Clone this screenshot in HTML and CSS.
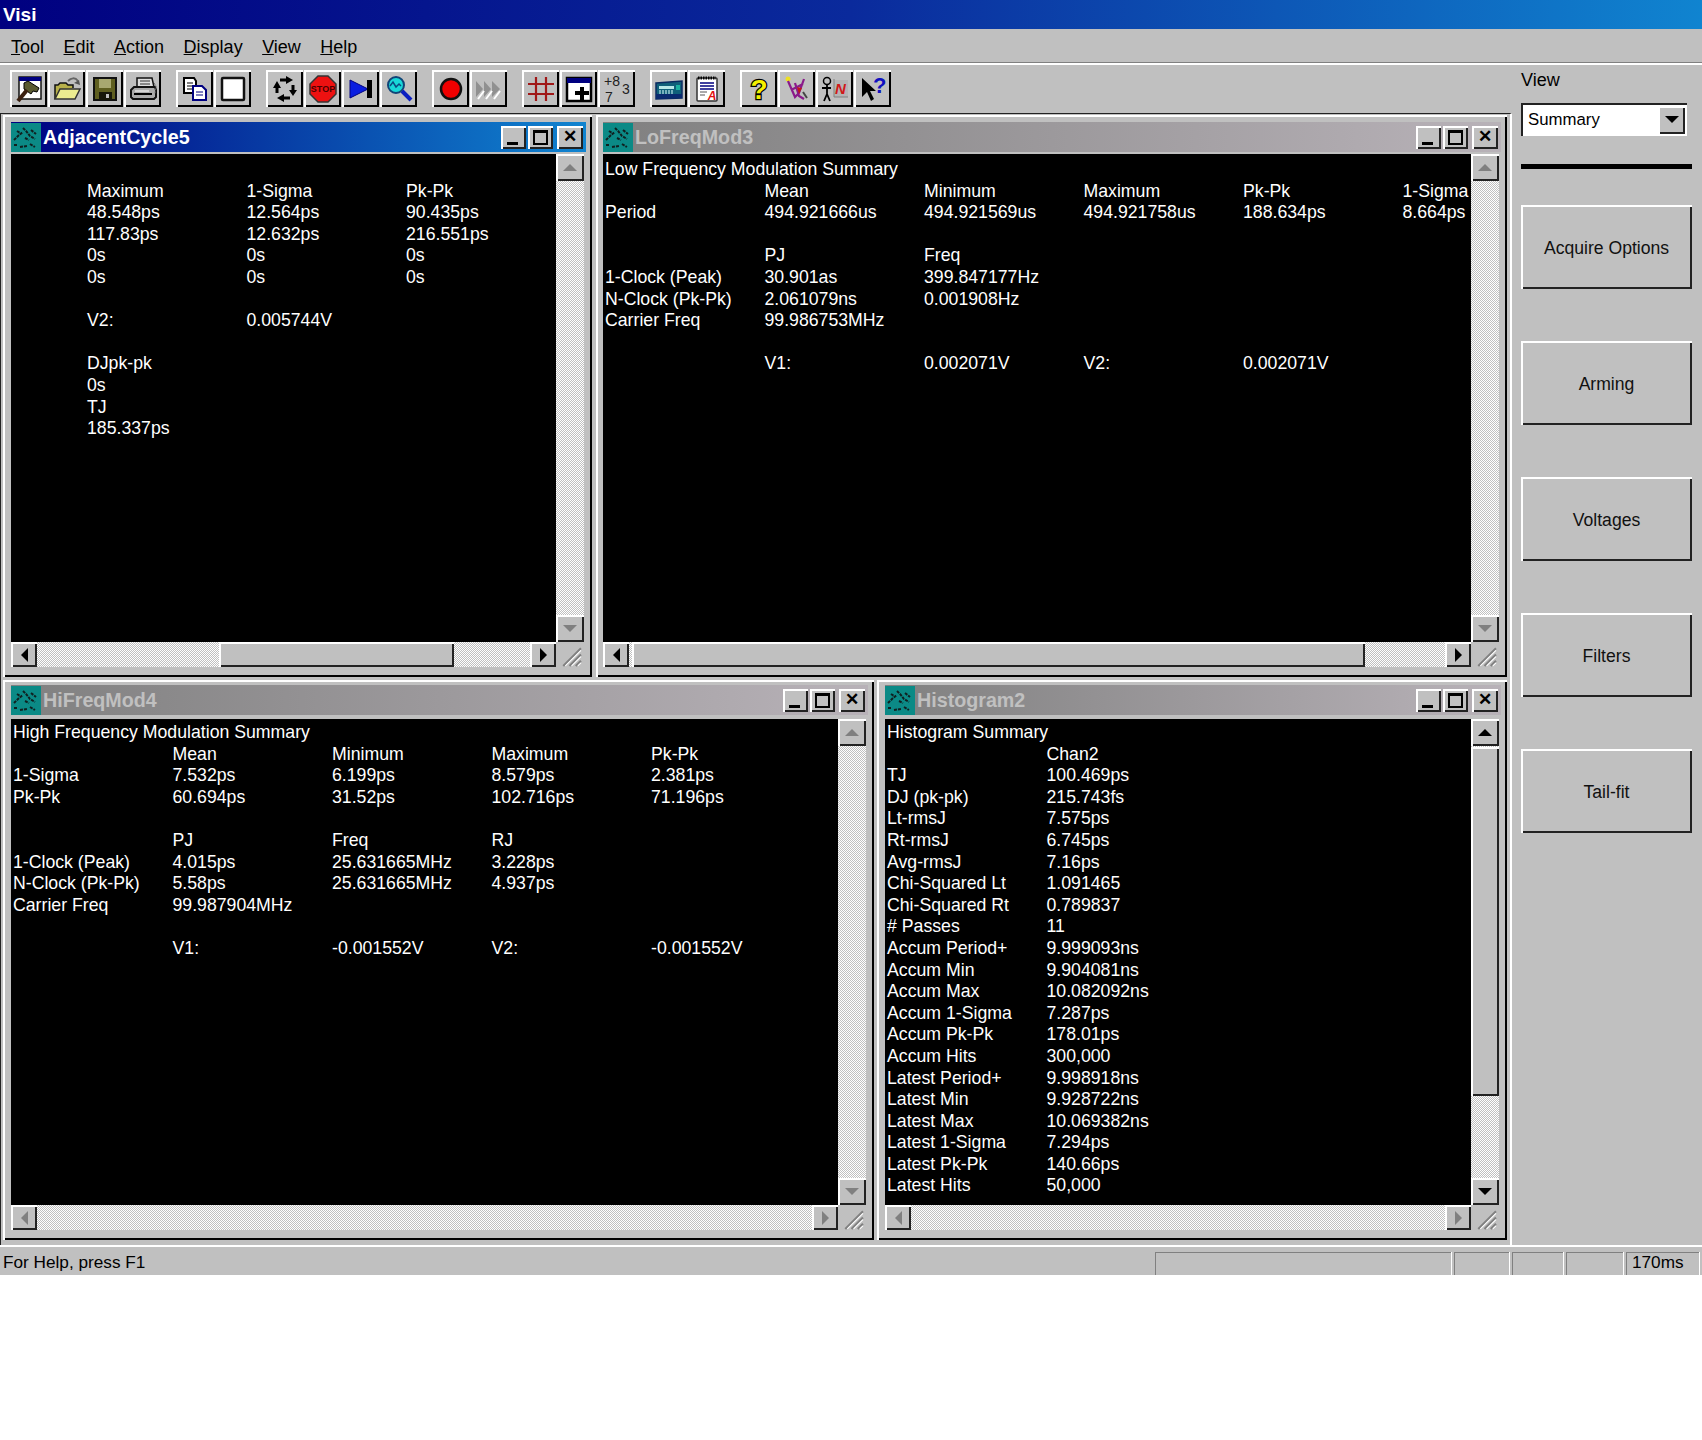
FILE: index.html
```html
<!DOCTYPE html>
<html lang="en">
<head>
    <meta charset="UTF-8">
    <title>Visi</title>
    <link rel="stylesheet" href="styles.css">
</head>
<body>
<svg class="defs" width="0" height="0">
    <symbol id="winicon" viewBox="0 0 30 29">
        <rect width="30" height="29" fill="#0b8a86"/>
        <path d="M3 17l5-5 4-3M12 5l3 3 4 5 5 3M3 22h4M9 24l7-1M19 21l5 3M6 8l3 2M20 7l5 4M14 15l4 2" stroke="#102020" stroke-width="2" stroke-dasharray="3 1" fill="none"/>
    </symbol>
    <symbol id="grip" viewBox="0 0 24 24">
        <path d="M23 6L6 23M23 12L12 23M23 18L18 23" stroke="#808080" stroke-width="2"/>
        <path d="M23 8L8 23M23 14L14 23M23 20L20 23" stroke="#fff" stroke-width="1"/>
    </symbol>
</svg>

<div class="app">
    <div class="titlebar">Visi</div>
    <div class="menubar">
        <span class="menu"><u>T</u>ool</span>
        <span class="menu"><u>E</u>dit</span>
        <span class="menu"><u>A</u>ction</span>
        <span class="menu"><u>D</u>isplay</span>
        <span class="menu"><u>V</u>iew</span>
        <span class="menu"><u>H</u>elp</span>
    </div>

    <div class="main">
        <div class="left-col">
            <div class="toolbar">
                <div class="tb-group">
                    <button class="tb-btn"><svg width="28" height="28" viewBox="0 0 28 28"><rect x="4" y="2" width="22" height="22" fill="#fff" stroke="#111" stroke-width="1.5"/><rect x="4" y="2" width="22" height="4" fill="#000080"/><path d="M9 8l4-2 11 7-2 4-4-1-2 3-7-5z" fill="#5a5a30" stroke="#000"/><path d="M12 15L3 26" stroke="#3a2010" stroke-width="4"/></svg></button>
                    <button class="tb-btn"><svg width="28" height="28" viewBox="0 0 28 28"><path d="M2 24V10h3l2-2h6l2 2h5v3" fill="#b7b04a" stroke="#111" stroke-width="1.5"/><path d="M2 24l5-10h20l-5 10z" fill="#ecec90" stroke="#333" stroke-width="1.5"/><path d="M15 6c3-3 7-4 10 0" stroke="#666" stroke-width="2" fill="none"/><path d="M27 10l-6-2 5-3z" fill="#555"/></svg></button>
                    <button class="tb-btn"><svg width="28" height="28" viewBox="0 0 28 28"><rect x="3" y="3" width="22" height="22" fill="#5f5f20" stroke="#111" stroke-width="2"/><rect x="8" y="4" width="12" height="9" fill="#a8a870"/><rect x="8" y="17" width="13" height="8" fill="#18180a"/><rect x="15" y="19" width="3" height="4" fill="#c0c0c0"/></svg></button>
                    <button class="tb-btn"><svg width="28" height="28" viewBox="0 0 28 28"><path d="M8 3h15l2 9H8z" fill="#ddd" stroke="#111" stroke-width="1.5"/><path d="M11 6h10M11 9h10" stroke="#333"/><path d="M2 15l3-3h21l1 3v7l-2 2H4l-2-2z" fill="#aaa" stroke="#111" stroke-width="2"/><path d="M5 19h18" stroke="#000" stroke-width="2"/><path d="M6 16h14" stroke="#fff"/><path d="M25 8l2 3-1 8" stroke="#666" stroke-dasharray="2 1" fill="none"/></svg></button>
                </div>
                <div class="tb-group">
                    <button class="tb-btn"><svg width="28" height="28" viewBox="0 0 28 28"><path d="M3 3h10l2 3v12H3z" fill="#fff" stroke="#000" stroke-width="2"/><path d="M6 8h6M6 11h6M6 14h6" stroke="#000"/><path d="M12 11h9l4 4v10H12z" fill="#fff" stroke="#000080" stroke-width="2"/><path d="M15 17h7M15 20h7" stroke="#000080"/></svg></button>
                    <button class="tb-btn"><svg width="28" height="28" viewBox="0 0 28 28"><rect x="3" y="3" width="22" height="22" rx="1" fill="#fff" stroke="#111" stroke-width="2.5"/></svg></button>
                </div>
                <div class="tb-group">
                    <button class="tb-btn"><svg width="28" height="28" viewBox="0 0 28 28"><path d="M9 5h7M22 10v6M19 23h-7M6 18v-6" stroke="#000" stroke-width="3" fill="none"/><path d="M15 1l7 4-7 4zM18 15h8l-4 6zM13 19l-7 4 7 4zM2 13h8L6 6z" fill="#000"/></svg></button>
                    <button class="tb-btn"><svg width="28" height="28" viewBox="0 0 28 28"><path d="M9 1h10l8 8v10l-8 8H9l-8-8V9z" fill="#ee1111" stroke="#333" stroke-width="1.5"/><text x="14" y="17" text-anchor="middle" class="stop-text">STOP</text></svg></button>
                    <button class="tb-btn"><svg width="28" height="28" viewBox="0 0 28 28"><path d="M3 5l18 9-18 9z" fill="#0a1ee0" stroke="#000080"/><rect x="20" y="5" width="5" height="18" fill="#000"/></svg></button>
                    <button class="tb-btn"><svg width="28" height="28" viewBox="0 0 28 28"><circle cx="11" cy="10" r="8" fill="#18d8d8" stroke="#147" stroke-width="2"/><path d="M5 11l3-4 3 5 3-3 2 2" stroke="#0a4a80" fill="none" stroke-width="1.5"/><path d="M17 16l9 9" stroke="#0a1ec0" stroke-width="4"/></svg></button>
                </div>
                <div class="tb-group">
                    <button class="tb-btn"><svg width="28" height="28" viewBox="0 0 28 28"><circle cx="14" cy="14" r="10" fill="#f00000" stroke="#111" stroke-width="2.5"/></svg></button>
                    <button class="tb-btn"><svg width="28" height="28" viewBox="0 0 28 28"><path d="M1 6l7 8-7 8zM9 6l7 8-7 8zM17 6l8 8-8 8z" fill="#909090"/><path d="M3 24l6-8M11 24l6-8M19 24l6-8" stroke="#fff" stroke-width="2"/></svg></button>
                </div>
                <div class="tb-group">
                    <button class="tb-btn"><svg width="28" height="28" viewBox="0 0 28 28"><path d="M9 2v24M19 2v24M1 9h26M1 19h26" stroke="#a01818" stroke-width="2.2"/></svg></button>
                    <button class="tb-btn"><svg width="28" height="28" viewBox="0 0 28 28"><rect x="2" y="3" width="24" height="23" fill="#fff" stroke="#000" stroke-width="2.5"/><rect x="2" y="3" width="24" height="5" fill="#000080"/><path d="M17 12v13M10 18h14" stroke="#000" stroke-width="4"/></svg></button>
                    <button class="tb-btn"><svg width="28" height="28" viewBox="0 0 28 28"><text x="1" y="11" class="num-text">+8</text><text x="2" y="27" class="num-text">7</text><text x="19" y="19" class="num-text">3</text></svg></button>
                </div>
                <div class="tb-group">
                    <button class="tb-btn"><svg width="28" height="28" viewBox="0 0 28 28"><path d="M1 8l26-2v17l-26 1z" fill="#10607a" stroke="#0a2a60" stroke-width="1.5"/><path d="M1 19h26v4l-26 1z" fill="#0a2a70"/><rect x="4" y="11" width="15" height="3" fill="#b8e8e8"/><path d="M4 16h14M4 18h14" stroke="#dff" stroke-dasharray="2 1"/><rect x="21" y="10" width="4" height="5" fill="#1ab0a0"/></svg></button>
                    <button class="tb-btn"><svg width="28" height="28" viewBox="0 0 28 28"><rect x="4" y="3" width="20" height="23" rx="1" fill="#fff" stroke="#333" stroke-width="1.5"/><path d="M5 3h18" stroke="#000" stroke-width="3" stroke-dasharray="1.5 1"/><path d="M7 8h14M7 11h14M7 14h14" stroke="#000080" stroke-width="1.5"/><path d="M7 17h7M7 20h5" stroke="#555"/><text x="19" y="25" text-anchor="middle" class="note-text">A</text></svg></button>
                </div>
                <div class="tb-group">
                    <button class="tb-btn"><svg width="28" height="28" viewBox="0 0 28 28"><text x="14" y="24" text-anchor="middle" class="help-text">?</text></svg></button>
                    <button class="tb-btn"><svg width="28" height="28" viewBox="0 0 28 28"><circle cx="5" cy="4" r="2.5" fill="#eee020"/><path d="M5 6l7 16 4-4 5-14M12 8l4 13 5 3M8 15l12-6" stroke="#8a1a8a" stroke-width="2.2" fill="none"/><path d="M14 12l5 1-3 6z" fill="#c01818"/><path d="M20 17l4 6" stroke="#444" stroke-width="2"/></svg></button>
                    <button class="tb-btn"><svg width="28" height="28" viewBox="0 0 28 28"><rect x="13" y="5" width="14" height="17" fill="#b4b4b4"/><circle cx="6" cy="6" r="3.5" fill="none" stroke="#000" stroke-width="1.5"/><path d="M6 10v9M1 13h9M6 19l-3 7M6 19l3 7" stroke="#000" stroke-width="1.8"/><path d="M13 4v18h14" stroke="#808080" fill="none"/><text x="14" y="19" class="red-n">N</text></svg></button>
                    <button class="tb-btn"><svg width="28" height="28" viewBox="0 0 28 28"><path d="M3 3v19l5-5 4 9 3-2-4-8h6z" fill="#000"/><text x="14" y="18" class="arrow-help">?</text></svg></button>
                </div>
            </div>

            <div class="mdi">
                <div class="mdi-row row-top">
                    <div class="win win-a">
                        <div class="win-title active"><svg class="win-icon"><use href="#winicon"/></svg><span class="win-name">AdjacentCycle5</span><span class="win-btns"><button class="cap-btn"><i class="cap-min"></i></button><button class="cap-btn"><i class="cap-max"></i></button><button class="cap-btn cap-close">✕</button></span></div>
                        <div class="win-body">
                            <div class="pane pane-shift">
                                <div class="row"></div>
                                <div class="row"><span>Maximum</span><span>1-Sigma</span><span>Pk-Pk</span></div>
                                <div class="row"><span>48.548ps</span><span>12.564ps</span><span>90.435ps</span></div>
                                <div class="row"><span>117.83ps</span><span>12.632ps</span><span>216.551ps</span></div>
                                <div class="row"><span>0s</span><span>0s</span><span>0s</span></div>
                                <div class="row"><span>0s</span><span>0s</span><span>0s</span></div>
                                <div class="row"></div>
                                <div class="row"><span>V2:</span><span>0.005744V</span></div>
                                <div class="row"></div>
                                <div class="row"><span>DJpk-pk</span></div>
                                <div class="row"><span>0s</span></div>
                                <div class="row"><span>TJ</span></div>
                                <div class="row"><span>185.337ps</span></div>
                            </div>
                            <div class="vbar"><b class="sb-btn"><i class="arr up off"></i></b><div class="track"></div><b class="sb-btn"><i class="arr down off"></i></b></div>
                            <div class="hbar"><b class="sb-btn"><i class="arr left"></i></b><div class="track"><div class="thumb thumb-a"></div></div><b class="sb-btn"><i class="arr right"></i></b></div>
                            <svg class="grip"><use href="#grip"/></svg>
                        </div>
                    </div>

                    <div class="win win-fill win-b">
                        <div class="win-title"><svg class="win-icon"><use href="#winicon"/></svg><span class="win-name">LoFreqMod3</span><span class="win-btns"><button class="cap-btn"><i class="cap-min"></i></button><button class="cap-btn"><i class="cap-max"></i></button><button class="cap-btn cap-close">✕</button></span></div>
                        <div class="win-body">
                            <div class="pane">
                                <div class="row"><span class="wide">Low Frequency Modulation Summary</span></div>
                                <div class="row"><span></span><span>Mean</span><span>Minimum</span><span>Maximum</span><span>Pk-Pk</span><span>1-Sigma</span></div>
                                <div class="row"><span>Period</span><span>494.921666us</span><span>494.921569us</span><span>494.921758us</span><span>188.634ps</span><span>8.664ps</span></div>
                                <div class="row"></div>
                                <div class="row"><span></span><span>PJ</span><span>Freq</span></div>
                                <div class="row"><span>1-Clock (Peak)</span><span>30.901as</span><span>399.847177Hz</span></div>
                                <div class="row"><span>N-Clock (Pk-Pk)</span><span>2.061079ns</span><span>0.001908Hz</span></div>
                                <div class="row"><span>Carrier Freq</span><span>99.986753MHz</span></div>
                                <div class="row"></div>
                                <div class="row"><span></span><span>V1:</span><span>0.002071V</span><span>V2:</span><span>0.002071V</span></div>
                            </div>
                            <div class="vbar"><b class="sb-btn"><i class="arr up off"></i></b><div class="track"></div><b class="sb-btn"><i class="arr down off"></i></b></div>
                            <div class="hbar"><b class="sb-btn"><i class="arr left"></i></b><div class="track"><div class="thumb thumb-b"></div></div><b class="sb-btn"><i class="arr right"></i></b></div>
                            <svg class="grip"><use href="#grip"/></svg>
                        </div>
                    </div>
                </div>

                <div class="mdi-row row-bottom">
                    <div class="win win-c">
                        <div class="win-title"><svg class="win-icon"><use href="#winicon"/></svg><span class="win-name">HiFreqMod4</span><span class="win-btns"><button class="cap-btn"><i class="cap-min"></i></button><button class="cap-btn"><i class="cap-max"></i></button><button class="cap-btn cap-close">✕</button></span></div>
                        <div class="win-body">
                            <div class="pane">
                                <div class="row"><span class="wide">High Frequency Modulation Summary</span></div>
                                <div class="row"><span></span><span>Mean</span><span>Minimum</span><span>Maximum</span><span>Pk-Pk</span></div>
                                <div class="row"><span>1-Sigma</span><span>7.532ps</span><span>6.199ps</span><span>8.579ps</span><span>2.381ps</span></div>
                                <div class="row"><span>Pk-Pk</span><span>60.694ps</span><span>31.52ps</span><span>102.716ps</span><span>71.196ps</span></div>
                                <div class="row"></div>
                                <div class="row"><span></span><span>PJ</span><span>Freq</span><span>RJ</span></div>
                                <div class="row"><span>1-Clock (Peak)</span><span>4.015ps</span><span>25.631665MHz</span><span>3.228ps</span></div>
                                <div class="row"><span>N-Clock (Pk-Pk)</span><span>5.58ps</span><span>25.631665MHz</span><span>4.937ps</span></div>
                                <div class="row"><span>Carrier Freq</span><span>99.987904MHz</span></div>
                                <div class="row"></div>
                                <div class="row"><span></span><span>V1:</span><span>-0.001552V</span><span>V2:</span><span>-0.001552V</span></div>
                            </div>
                            <div class="vbar"><b class="sb-btn"><i class="arr up off"></i></b><div class="track"></div><b class="sb-btn"><i class="arr down off"></i></b></div>
                            <div class="hbar"><b class="sb-btn"><i class="arr left off"></i></b><div class="track"></div><b class="sb-btn"><i class="arr right off"></i></b></div>
                            <svg class="grip"><use href="#grip"/></svg>
                        </div>
                    </div>

                    <div class="win win-fill">
                        <div class="win-title"><svg class="win-icon"><use href="#winicon"/></svg><span class="win-name">Histogram2</span><span class="win-btns"><button class="cap-btn"><i class="cap-min"></i></button><button class="cap-btn"><i class="cap-max"></i></button><button class="cap-btn cap-close">✕</button></span></div>
                        <div class="win-body">
                            <div class="pane">
                                <div class="row"><span class="wide">Histogram Summary</span></div>
                                <div class="row"><span></span><span>Chan2</span></div>
                                <div class="row"><span>TJ</span><span>100.469ps</span></div>
                                <div class="row"><span>DJ (pk-pk)</span><span>215.743fs</span></div>
                                <div class="row"><span>Lt-rmsJ</span><span>7.575ps</span></div>
                                <div class="row"><span>Rt-rmsJ</span><span>6.745ps</span></div>
                                <div class="row"><span>Avg-rmsJ</span><span>7.16ps</span></div>
                                <div class="row"><span>Chi-Squared Lt</span><span>1.091465</span></div>
                                <div class="row"><span>Chi-Squared Rt</span><span>0.789837</span></div>
                                <div class="row"><span># Passes</span><span>11</span></div>
                                <div class="row"><span>Accum Period+</span><span>9.999093ns</span></div>
                                <div class="row"><span>Accum Min</span><span>9.904081ns</span></div>
                                <div class="row"><span>Accum Max</span><span>10.082092ns</span></div>
                                <div class="row"><span>Accum 1-Sigma</span><span>7.287ps</span></div>
                                <div class="row"><span>Accum Pk-Pk</span><span>178.01ps</span></div>
                                <div class="row"><span>Accum Hits</span><span>300,000</span></div>
                                <div class="row"><span>Latest Period+</span><span>9.998918ns</span></div>
                                <div class="row"><span>Latest Min</span><span>9.928722ns</span></div>
                                <div class="row"><span>Latest Max</span><span>10.069382ns</span></div>
                                <div class="row"><span>Latest 1-Sigma</span><span>7.294ps</span></div>
                                <div class="row"><span>Latest Pk-Pk</span><span>140.66ps</span></div>
                                <div class="row"><span>Latest Hits</span><span>50,000</span></div>
                            </div>
                            <div class="vbar"><b class="sb-btn"><i class="arr up"></i></b><div class="track"><div class="thumb thumb-v"></div></div><b class="sb-btn"><i class="arr down"></i></b></div>
                            <div class="hbar"><b class="sb-btn"><i class="arr left off"></i></b><div class="track"></div><b class="sb-btn"><i class="arr right off"></i></b></div>
                            <svg class="grip"><use href="#grip"/></svg>
                        </div>
                    </div>
                </div>
            </div>
        </div>

        <div class="side">
            <div class="side-label">View</div>
            <div class="select"><span class="select-text">Summary</span><b class="select-btn"><i class="arr down"></i></b></div>
            <div class="side-line"></div>
            <button class="side-btn">Acquire Options</button>
            <button class="side-btn">Arming</button>
            <button class="side-btn">Voltages</button>
            <button class="side-btn">Filters</button>
            <button class="side-btn">Tail-fit</button>
        </div>
    </div>

    <div class="statusbar">
        <span class="status-text">For Help, press F1</span>
        <span class="pane-status status-big"></span>
        <span class="pane-status status-s1"></span>
        <span class="pane-status status-s2"></span>
        <span class="pane-status status-s3"></span>
        <span class="pane-status status-time">170ms</span>
    </div>
</div>
</body>
</html>
```

FILE: styles.css
```css
body {
    margin: 0;
    background-color: #fff;
    font-family: "Liberation Sans", Arial, sans-serif;
    font-size: 18px;
    color: #000;
}
.defs {
    position: absolute;
}
.app {
    width: 1702px;
    height: 1275px;
    display: flex;
    flex-direction: column;
    background-color: #c0c0c0;
}
.titlebar {
    height: 29px;
    flex-shrink: 0;
    line-height: 29px;
    padding-left: 3px;
    color: #fff;
    font-size: 19px;
    font-weight: bold;
    background: linear-gradient(90deg, #000080 0%, #0a2a9c 50%, #1084d0 100%);
}
.menubar {
    height: 34px;
    flex-shrink: 0;
    display: flex;
    align-items: center;
    gap: 19.5px;
    padding-left: 11px;
    padding-top: 4px;
    box-sizing: border-box;
    border-bottom: 1px solid #808080;
}
.main {
    height: 1182px;
    flex-shrink: 0;
    display: flex;
    border-top: 2px solid #fff;
    box-sizing: border-box;
}
.left-col {
    width: 1512px;
    display: flex;
    flex-direction: column;
}

/* Toolbar */
.toolbar {
    height: 48px;
    flex-shrink: 0;
    display: flex;
    gap: 15px;
    padding: 5px 0 0 10px;
    box-sizing: border-box;
}
.tb-group {
    display: flex;
    gap: 1px;
}
.tb-btn {
    width: 37px;
    height: 37px;
    padding: 0;
    display: flex;
    align-items: center;
    justify-content: center;
    background-color: #c0c0c0;
    border: none;
    box-shadow: inset 2px 2px 0 #fff, inset -2px -2px 0 #000;
}
.tb-btn svg {
    overflow: visible;
}
.stop-text {
    font: bold 9px "Liberation Sans", sans-serif;
    fill: #4a0000;
}
.note-text {
    font: bold italic 12px "Liberation Sans", sans-serif;
    fill: #e01010;
}
.num-text {
    font: 14px "Liberation Sans", sans-serif;
    fill: #222;
}
.help-text {
    font: bold 28px "Liberation Sans", sans-serif;
    fill: #f4f000;
    stroke: #000;
    stroke-width: 2.5px;
    paint-order: stroke;
}
.red-n {
    font: bold italic 15px "Liberation Sans", sans-serif;
    fill: #d01818;
}
.arrow-help {
    font: bold 22px "Liberation Sans", sans-serif;
    fill: #1010c0;
}

/* MDI area */
.mdi {
    flex: 1;
    display: flex;
    flex-direction: column;
    gap: 3px;
    padding: 1px 3px 4px 2px;
    border-top: 1px solid #222;
    border-left: 1px solid #222;
    border-right: 2px solid #fff;
}
.mdi-row {
    display: flex;
}
.row-top {
    height: 562px;
    gap: 4px;
}
.row-bottom {
    height: 560px;
    gap: 3px;
}
.win {
    display: flex;
    flex-direction: column;
    padding: 7px 6px 10px 8px;
    box-sizing: border-box;
    background-color: #c0c0c0;
    box-shadow: inset 2px 2px 0 #fff, inset -2px -2px 0 #000;
}
.win-a {
    width: 589px;
}
.win-b {
    padding-left: 7px;
}
.win-c {
    width: 871px;
}
.win-fill {
    flex: 1;
}
.row-bottom .win {
    padding-top: 5px;
}
.row-bottom .win-title {
    margin-bottom: 4px;
}
.row-top .pane {
    padding-top: 5px;
}
.win-title {
    height: 30px;
    flex-shrink: 0;
    display: flex;
    align-items: center;
    margin-bottom: 2px;
    color: #c0c0c0;
    font-size: 19.7px;
    font-weight: bold;
    background: linear-gradient(90deg, #808080 0%, #b8b2b8 100%);
}
.win-title.active {
    color: #fff;
    background: linear-gradient(90deg, #000080 0%, #1084d0 100%);
}
.win-icon {
    width: 30px;
    height: 29px;
}
.win-name {
    margin-left: 2px;
    flex: 1;
}
.win-btns {
    display: flex;
    gap: 2px;
    padding-right: 3px;
}
.cap-btn {
    width: 25px;
    height: 23px;
    padding: 0;
    position: relative;
    background-color: #c0c0c0;
    border: none;
    box-shadow: inset 2px 2px 0 #fff, inset -2px -2px 0 #222;
}
.cap-close {
    width: 26px;
    margin-left: 2px;
    font-size: 17px;
    font-weight: bold;
    line-height: 22px;
    color: #000;
}
.cap-min {
    position: absolute;
    left: 6px;
    bottom: 4px;
    width: 11px;
    height: 3px;
    background-color: #000;
}
.cap-max {
    position: absolute;
    left: 5px;
    top: 4px;
    width: 11px;
    height: 10px;
    border: 2px solid #000;
    border-top-width: 3px;
}
.win-body {
    flex: 1;
    min-height: 0;
    display: grid;
    grid-template-columns: 1fr 30px;
    grid-template-rows: 1fr 25px;
}
.pane {
    background-color: #000;
    color: #fff;
    padding: 3px 0 0 2px;
    overflow: hidden;
    font-size: 17.7px;
    line-height: 21.6px;
}
.pane-shift {
    padding-left: 76px;
}
.row {
    height: 21.6px;
    display: flex;
    white-space: nowrap;
}
.row span {
    width: 159.5px;
    flex-shrink: 0;
}
.row .wide {
    width: auto;
}

/* Scrollbars */
.vbar {
    width: 28px;
    display: flex;
    flex-direction: column;
}
.hbar {
    display: flex;
}
.track {
    flex: 1;
    display: flex;
    flex-direction: column;
    background: repeating-conic-gradient(#fff 0 25%, #c0c0c0 0 50%) 0 0 / 2px 2px;
}
.hbar .track {
    flex-direction: row;
}
.sb-btn {
    width: 28px;
    height: 27px;
    flex-shrink: 0;
    display: flex;
    align-items: center;
    justify-content: center;
    background-color: #c0c0c0;
    box-shadow: inset 2px 2px 0 #fff, inset -2px -2px 0 #222;
}
.hbar .sb-btn {
    width: 26px;
    height: 25px;
}
.thumb {
    background-color: #c0c0c0;
    box-shadow: inset 2px 2px 0 #fff, inset -2px -2px 0 #222;
}
.thumb-a {
    margin-left: 182px;
    width: 235px;
}
.thumb-b {
    margin-left: 3px;
    width: 733px;
}
.thumb-v {
    margin-top: 1px;
    height: 349px;
}
.arr {
    width: 0;
    height: 0;
    border: 0 solid transparent;
}
.arr.up {
    border-width: 0 7px 7px;
    border-bottom-color: #000;
}
.arr.down {
    border-width: 7px 7px 0;
    border-top-color: #000;
}
.arr.left {
    border-width: 7px 7px 7px 0;
    border-right-color: #000;
}
.arr.right {
    border-width: 7px 0 7px 7px;
    border-left-color: #000;
}
.arr.up.off {
    border-bottom-color: #808080;
}
.arr.down.off {
    border-top-color: #808080;
}
.arr.left.off {
    border-right-color: #808080;
}
.arr.right.off {
    border-left-color: #808080;
}
.grip {
    width: 27px;
    height: 25px;
}

/* Right panel */
.side {
    flex: 1;
    display: flex;
    flex-direction: column;
    padding: 3px 10px 0 9px;
}
.side-label {
    height: 35px;
    line-height: 24px;
}
.select {
    height: 33px;
    width: 166px;
    flex-shrink: 0;
    display: flex;
    align-items: center;
    background-color: #fff;
    box-shadow: inset 2px 2px 0 #222;
    box-sizing: border-box;
    padding: 2px 2px 2px 7px;
    font-size: 16.8px;
}
.select-text {
    flex: 1;
}
.select-btn {
    width: 27px;
    height: 28px;
    display: flex;
    align-items: center;
    justify-content: center;
    background-color: #c0c0c0;
    box-shadow: inset 2px 2px 0 #fff, inset -2px -2px 0 #222;
}
.side-line {
    height: 5px;
    margin-top: 28px;
    margin-bottom: 36px;
    background-color: #000;
}
.side-btn {
    height: 84px;
    margin-bottom: 52px;
    padding: 2px 0 0;
    font: 17.6px "Liberation Sans", Arial, sans-serif;
    color: #111;
    background-color: #c0c0c0;
    border: none;
    box-shadow: inset 2px 2px 0 #fff, inset -2px -2px 0 #222;
}

/* Status bar */
.statusbar {
    flex: 1;
    display: flex;
    gap: 3px;
    padding: 5px 3px 0 3px;
    box-sizing: border-box;
    border-top: 2px solid #fff;
    font-size: 17.2px;
}
.status-text {
    width: 1149px;
    line-height: 20px;
}
.pane-status {
    box-sizing: border-box;
    padding-left: 6px;
    line-height: 20px;
    box-shadow: inset 1px 1px 0 #808080, 1px 0 0 #fff;
}
.status-big {
    width: 296px;
}
.status-s1 {
    width: 55px;
}
.status-s2 {
    width: 51px;
}
.status-s3 {
    width: 57px;
}
.status-time {
    width: 73px;
}
```
